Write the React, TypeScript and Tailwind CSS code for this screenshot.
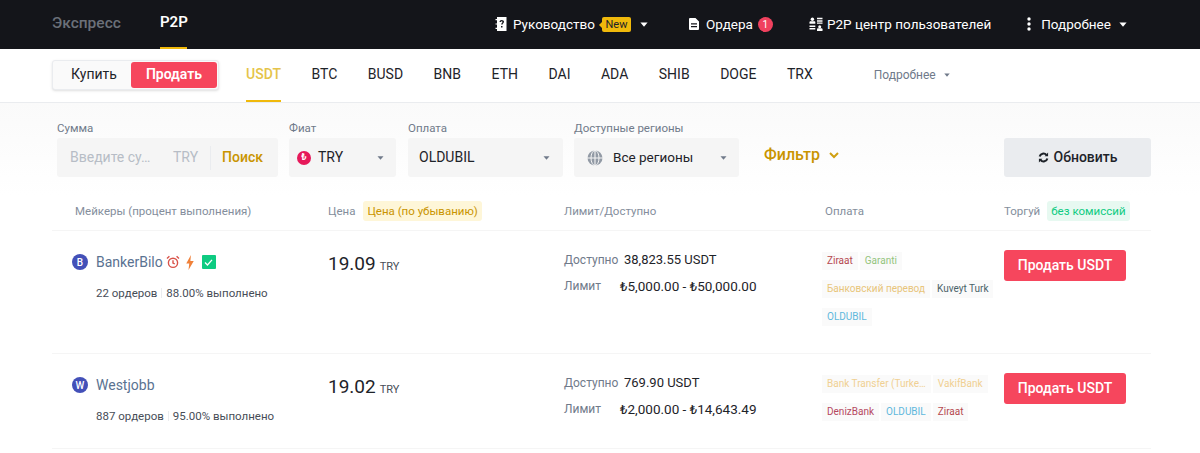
import React from 'react';

const FONT = { fontFamily: 'Roboto, "Noto Sans", sans-serif' };

const Caret = ({ className }: { className: string }) => (
  <svg viewBox="0 0 10 6" className={className} fill="currentColor">
    <path d="M0.5 0.5h9L5 5.8z" />
  </svg>
);

const GuideIcon = () => (
  <svg viewBox="0 0 12 14" className="w-[12px] h-[14px]" fill="#fff">
    <path fillRule="evenodd" d="M2 0h9.500v14H2v-2H0.500v-1.200H2V7.600H0.500V6.400H2V3.200H0.500V2H2zM6.700 3C5.400 3 4.600 3.800 4.500 5h1.400c0-.5.300-.8.800-.8s.8.300.8.700c0 .8-1.300 1-1.300 2.600h1.400c0-1 1.400-1.300 1.400-2.700C9 3.800 8 3 6.700 3zM6 9v1.500h1.500V9z" />
  </svg>
);

const DocIcon = () => (
  <svg viewBox="0 0 10 12" className="w-[10px] h-[12px]" fill="#fff">
    <path fillRule="evenodd" d="M0 1a1 1 0 0 1 1-1h5.500L10 3.500V11a1 1 0 0 1-1 1H1a1 1 0 0 1-1-1zM2 5.200v1.200h6V5.200zM2 8v1.200h6V8z" />
  </svg>
);

const UsersIcon = () => (
  <svg viewBox="0 0 14 14" className="w-[14px] h-[14px]" fill="#fff">
    <circle cx="3.400" cy="2.200" r="1.700" />
    <path d="M0.500 5.200c0-.6.500-1 1-1h3.800c.6 0 1 .4 1 1v1.600H0.500z" />
    <path d="M8 0.800h5.500v1.500H8zM8 3.200h5.500v1.500H8zM8 5.600h5.500v1.200H8z" />
    <path d="M0.500 8.400h5.800v1.500H0.500zM0.500 11h5.800v1.500H0.500z" />
    <circle cx="10.700" cy="9.800" r="1.500" />
    <path d="M8 12.200c0-.5.400-.9.900-.9h3.700c.5 0 .9.400.9.900V14H8z" />
  </svg>
);

const DotsIcon = () => (
  <svg viewBox="0 0 4 14" className="w-[4px] h-[14px]" fill="#fff">
    <circle cx="2" cy="2" r="1.700" />
    <circle cx="2" cy="7" r="1.700" />
    <circle cx="2" cy="12" r="1.700" />
  </svg>
);

const RefreshIcon = () => (
  <svg viewBox="0 0 12 12" className="w-[11px] h-[11px]" fill="none" stroke="#1e2329" strokeWidth="2.200">
    <path d="M1.800 5a4.300 4.300 0 0 1 7.400-1.800M10.200 7a4.300 4.300 0 0 1-7.400 1.800" />
    <path d="M11 0.600v4H7.200zM1 11.400v-4h3.800z" fill="#1e2329" stroke="none" />
  </svg>
);

const GlobeIcon = () => (
  <svg viewBox="0 0 16 16" className="w-[16px] h-[16px]" fill="none">
    <circle cx="8" cy="8" r="7.500" fill="#929aa5" />
    <path d="M8 0v16M0 8h16" stroke="#f5f5f5" strokeWidth="1.100" />
    <ellipse cx="8" cy="8" rx="4" ry="7.500" stroke="#f5f5f5" strokeWidth="1" />
  </svg>
);

const AlarmIcon = () => (
  <svg viewBox="0 0 14 14" className="w-[14px] h-[14px]" fill="none" stroke="#d9534a" strokeWidth="1.400">
    <circle cx="7" cy="7.800" r="4.600" />
    <path d="M7 5.200v2.800l1.800 1M1 3.400 3.400 1.200M13 3.400 10.600 1.200" />
  </svg>
);

const BoltIcon = () => (
  <svg viewBox="0 0 10 16" className="w-[10px] h-[15px]" fill="#f0813a">
    <path d="M6 0 1 9h3.200L3.400 16 9 6.400H5.400z" />
  </svg>
);

const CheckBox = () => (
  <span className="w-[14px] h-[14px] bg-[#0ecb81] rounded-[1px] flex items-center justify-center">
    <svg viewBox="0 0 10 8" className="w-[9px] h-[7px]" fill="none" stroke="#fff" strokeWidth="1.500">
      <path d="M1 4l2.800 2.800L9 1" />
    </svg>
  </span>
);

const Header = () => (
  <header className="h-[49px] bg-[#14151a] flex items-stretch pl-[52px] text-white">
    <a className="text-[15.500px] font-medium text-[#6b7079] flex items-center h-[47px] w-[108px]">Экспресс</a>
    <a className="text-[15px] font-semibold border-b-[2px] border-[#f0b90b] flex items-center h-[49px] pb-[2px] w-[27px]">P2P</a>
    <nav className="flex items-center ml-[308px] text-[13.500px] h-[49px] pb-[1px]">
      <GuideIcon />
      <span className="ml-[6px]">Руководство</span>
      <span className="relative ml-[7px] w-[29px] text-center bg-[#f0b90b] text-[#1e2329] text-[11px] leading-[15px] rounded-[2px]">
        <span className="absolute left-[-3px] top-[5px] border-y-[3px] border-r-[3px] border-y-transparent border-r-[#f0b90b]" />
        New
      </span>
      <Caret className="w-[8px] h-[5px] ml-[9px] text-white" />
      <span className="ml-[41px]"><DocIcon /></span>
      <span className="ml-[7px]">Ордера</span>
      <span className="ml-[5px] w-[15px] h-[15px] rounded-full bg-[#f0415e] text-[10px] flex items-center justify-center">1</span>
      <span className="ml-[36px]"><UsersIcon /></span>
      <span className="ml-[4px]">P2P центр пользователей</span>
      <span className="ml-[36px]"><DotsIcon /></span>
      <span className="ml-[10px]">Подробнее</span>
      <Caret className="w-[8px] h-[5px] ml-[8px] text-white" />
    </nav>
  </header>
);

const COINS = ['USDT', 'BTC', 'BUSD', 'BNB', 'ETH', 'DAI', 'ADA', 'SHIB', 'DOGE', 'TRX'];

const CoinBar = () => (
  <div className="h-[54px] bg-white border-b border-[#eaecef] flex items-stretch pl-[52px]">
    <div className="self-center w-[167px] h-[30px] mb-[1px] bg-[#fafafa] border border-[#eaecef] rounded-[3px] flex items-center pr-[1px] mt-[-1px] shadow-sm">
      <span className="w-[78px] pl-[4px] text-center text-[14px] text-[#1e2329]">Купить</span>
      <span className="w-[86px] h-[26px] rounded-[3px] bg-[#f6465d] text-white text-[14px] font-semibold flex items-center justify-center">Продать</span>
    </div>
    <div className="flex ml-[27px] gap-[30.500px] text-[14px] text-[#1e2329]">
      {COINS.map((c, i) => (
        <span
          key={c}
          className={i === 0 ? 'flex items-center text-[#e5c44a] border-b-[2px] border-[#f0b90b] font-medium' : 'flex items-center pb-[2px]'}
        >
          {c}
        </span>
      ))}
    </div>
    <div className="flex items-center ml-[61px] text-[12px] text-[#707a8a] pb-[2px]">
      Подробнее
      <Caret className="w-[6px] h-[4px] ml-[8px] text-[#707a8a]" />
    </div>
  </div>
);

const Field = ({ label, width, children }: { label: string; width: string; children: React.ReactNode }) => (
  <div className={`flex flex-col ${width}`}>
    <span className="text-[11.500px] leading-[16px] text-[#707a8a] mb-[2px]">{label}</span>
    <div className="h-[39px] bg-[#f5f5f5] rounded-[3px] flex items-center text-[14px] text-[#1e2329]">{children}</div>
  </div>
);

const Filters = () => (
  <div className="flex items-end pl-[57px] pt-[17px] pb-[19px] pr-[49px] bg-gradient-to-b from-[#fafafa] to-white">
    <Field label="Сумма" width="w-[221px] mr-[11px]">
      <span className="ml-[13px] w-[89px] text-[#b7bdc6] whitespace-nowrap">Введите су…</span>
      <span className="ml-[14px] text-[#b7bdc6]">TRY</span>
      <span className="ml-[12px] w-px h-[24px] bg-[#eaecef]" />
      <span className="ml-[11px] font-medium text-[#c99400]">Поиск</span>
    </Field>
    <Field label="Фиат" width="w-[107px] mr-[12px]">
      <span className="ml-[8px] w-[14px] h-[14px] rounded-full bg-[#e6195a] text-white text-[9px] font-bold flex items-center justify-center">₺</span>
      <span className="ml-[7px]">TRY</span>
      <Caret className="w-[7px] h-[4px] ml-auto mr-[12px] text-[#707a8a]" />
    </Field>
    <Field label="Оплата" width="w-[155px] mr-[11px]">
      <span className="ml-[11px]">OLDUBIL</span>
      <Caret className="w-[7px] h-[4px] ml-auto mr-[13px] text-[#707a8a]" />
    </Field>
    <Field label="Доступные регионы" width="w-[165px]">
      <span className="ml-[13px] flex"><GlobeIcon /></span>
      <span className="ml-[10px] text-[13.500px]">Все регионы</span>
      <Caret className="w-[7px] h-[4px] ml-auto mr-[12px] text-[#707a8a]" />
    </Field>
    <div className="h-[39px] ml-[25px] flex items-center text-[16px] font-medium text-[#c99400] pb-[5px]">
      Фильтр
      <svg viewBox="0 0 10 7" className="w-[10px] h-[7px] ml-[9px]" fill="none" stroke="#d0a012" strokeWidth="2">
        <path d="M1 1l4 4 4-4" />
      </svg>
    </div>
    <button className="ml-auto w-[147px] h-[39px] rounded-[3px] bg-[#eaecef] text-[14px] font-medium text-[#1e2329] flex items-center justify-center gap-[5px]">
      <RefreshIcon />
      Обновить
    </button>
  </div>
);

const COLS = 'grid grid-cols-[276px_236px_258px_182px_147px]';

const TableHead = () => (
  <div className={`${COLS} h-[35px] pt-[4px] items-start text-[11.500px] text-[#848e9c] border-b border-[#f5f5f5]`}>
    <span className="pl-[23px] leading-[22px] whitespace-nowrap">Мейкеры (процент выполнения)</span>
    <span className="flex items-center leading-[22px]">
      Цена
      <span className="ml-[8px] px-[4px] bg-[#fef6d8] text-[#c99400] rounded-[3px] leading-[20px]">Цена (по убыванию)</span>
    </span>
    <span className="leading-[22px]">Лимит/Доступно</span>
    <span className="pl-[3px] leading-[22px]">Оплата</span>
    <span className="flex items-center leading-[22px] whitespace-nowrap">
      Торгуй
      <span className="ml-[7px] px-[4px] bg-[#e7f9f1] text-[#0ecb81] rounded-[3px] leading-[20px]">без комиссий</span>
    </span>
  </div>
);

type Tag = { text: string; color: string };

type Offer = {
  letter: string;
  name: string;
  badges: boolean;
  orders: string;
  percent: string;
  price: string;
  available: string;
  limit: string;
  tags: Tag[];
  height: string;
};

const OFFERS: Offer[] = [
  {
    letter: 'B',
    name: 'BankerBilo',
    badges: true,
    orders: '22 ордеров',
    percent: '88.00% выполнено',
    price: '19.09',
    available: '38,823.55 USDT',
    limit: '₺5,000.00 - ₺50,000.00',
    height: 'h-[123px]',
    tags: [
      { text: 'Ziraat', color: 'text-[#b5484f]' },
      { text: 'Garanti', color: 'text-[#93c47d]' },
      { text: 'Банковский перевод', color: 'text-[#e8c57a]' },
      { text: 'Kuveyt Turk', color: 'text-[#4a6268]' },
      { text: 'OLDUBIL', color: 'text-[#5fb8dc]' },
    ],
  },
  {
    letter: 'W',
    name: 'Westjobb',
    badges: false,
    orders: '887 ордеров',
    percent: '95.00% выполнено',
    price: '19.02',
    available: '769.90 USDT',
    limit: '₺2,000.00 - ₺14,643.49',
    height: 'h-[95px]',
    tags: [
      { text: 'Bank Transfer (Turke…', color: 'text-[#f0d092]' },
      { text: 'VakifBank', color: 'text-[#f0d092]' },
      { text: 'DenizBank', color: 'text-[#b5485f]' },
      { text: 'OLDUBIL', color: 'text-[#5fb8dc]' },
      { text: 'Ziraat', color: 'text-[#b5484f]' },
    ],
  },
];

const OfferRow = ({ offer }: { offer: Offer }) => (
  <div className={`${COLS} ${offer.height} border-b border-[#f5f5f5] items-start pt-[19px]`}>
    <div className="pl-[20px]">
      <div className="flex items-center h-[24px]">
        <span className="w-[16px] h-[16px] rounded-full bg-[#4350b8] text-white text-[10px] font-medium flex items-center justify-center">{offer.letter}</span>
        <span className="ml-[8px] text-[14px] text-[#5a7291]">{offer.name}</span>
        {offer.badges && (
          <span className="flex items-center ml-[3px] gap-[5px]">
            <AlarmIcon />
            <BoltIcon />
            <span className="ml-[2px]"><CheckBox /></span>
          </span>
        )}
      </div>
      <div className="flex items-center ml-[24px] mt-[12px] text-[11.500px] leading-[14px] text-[#474d57] whitespace-nowrap">
        {offer.orders}
        <span className="mx-[4px] w-px h-[10px] bg-[#eaecef]" />
        {offer.percent}
      </div>
    </div>
    <div className="flex items-baseline h-[26px] mt-[1px]">
      <span className="text-[19px] text-[#1e2329] leading-[26px]">{offer.price}</span>
      <span className="ml-[4px] text-[11px] text-[#474d57]">TRY</span>
    </div>
    <div className="text-[#1e2329] text-[13px]">
      <div className="flex items-center h-[20px]">
        <span className="w-[60px] text-[12px] text-[#707a8a]">Доступно</span>
        {offer.available}
      </div>
      <div className="flex items-center h-[20px] mt-[6px]">
        <span className="w-[56px] text-[12px] text-[#707a8a]">Лимит</span>
        <span className="text-[13.500px]">{offer.limit}</span>
      </div>
    </div>
    <div className="flex flex-wrap gap-x-[2px] gap-y-[10px] mt-[2px] w-[172px]">
      {offer.tags.map(t => (
        <span key={t.text} className={`px-[5px] h-[18px] leading-[18px] bg-[#fafafa] text-[10px] whitespace-nowrap ${t.color}`}>
          {t.text}
        </span>
      ))}
    </div>
    <button className="w-[122px] h-[31px] rounded-[3px] bg-[#f6465d] text-white text-[14px] font-medium">Продать USDT</button>
  </div>
);

export default function App() {
  return (
    <div className="w-[1200px] h-[453px] overflow-hidden bg-white" style={FONT}>
      <Header />
      <CoinBar />
      <Filters />
      <div className="ml-[52px] w-[1099px]">
        <TableHead />
        {OFFERS.map(o => (
          <OfferRow key={o.name} offer={o} />
        ))}
      </div>
    </div>
  );
}
